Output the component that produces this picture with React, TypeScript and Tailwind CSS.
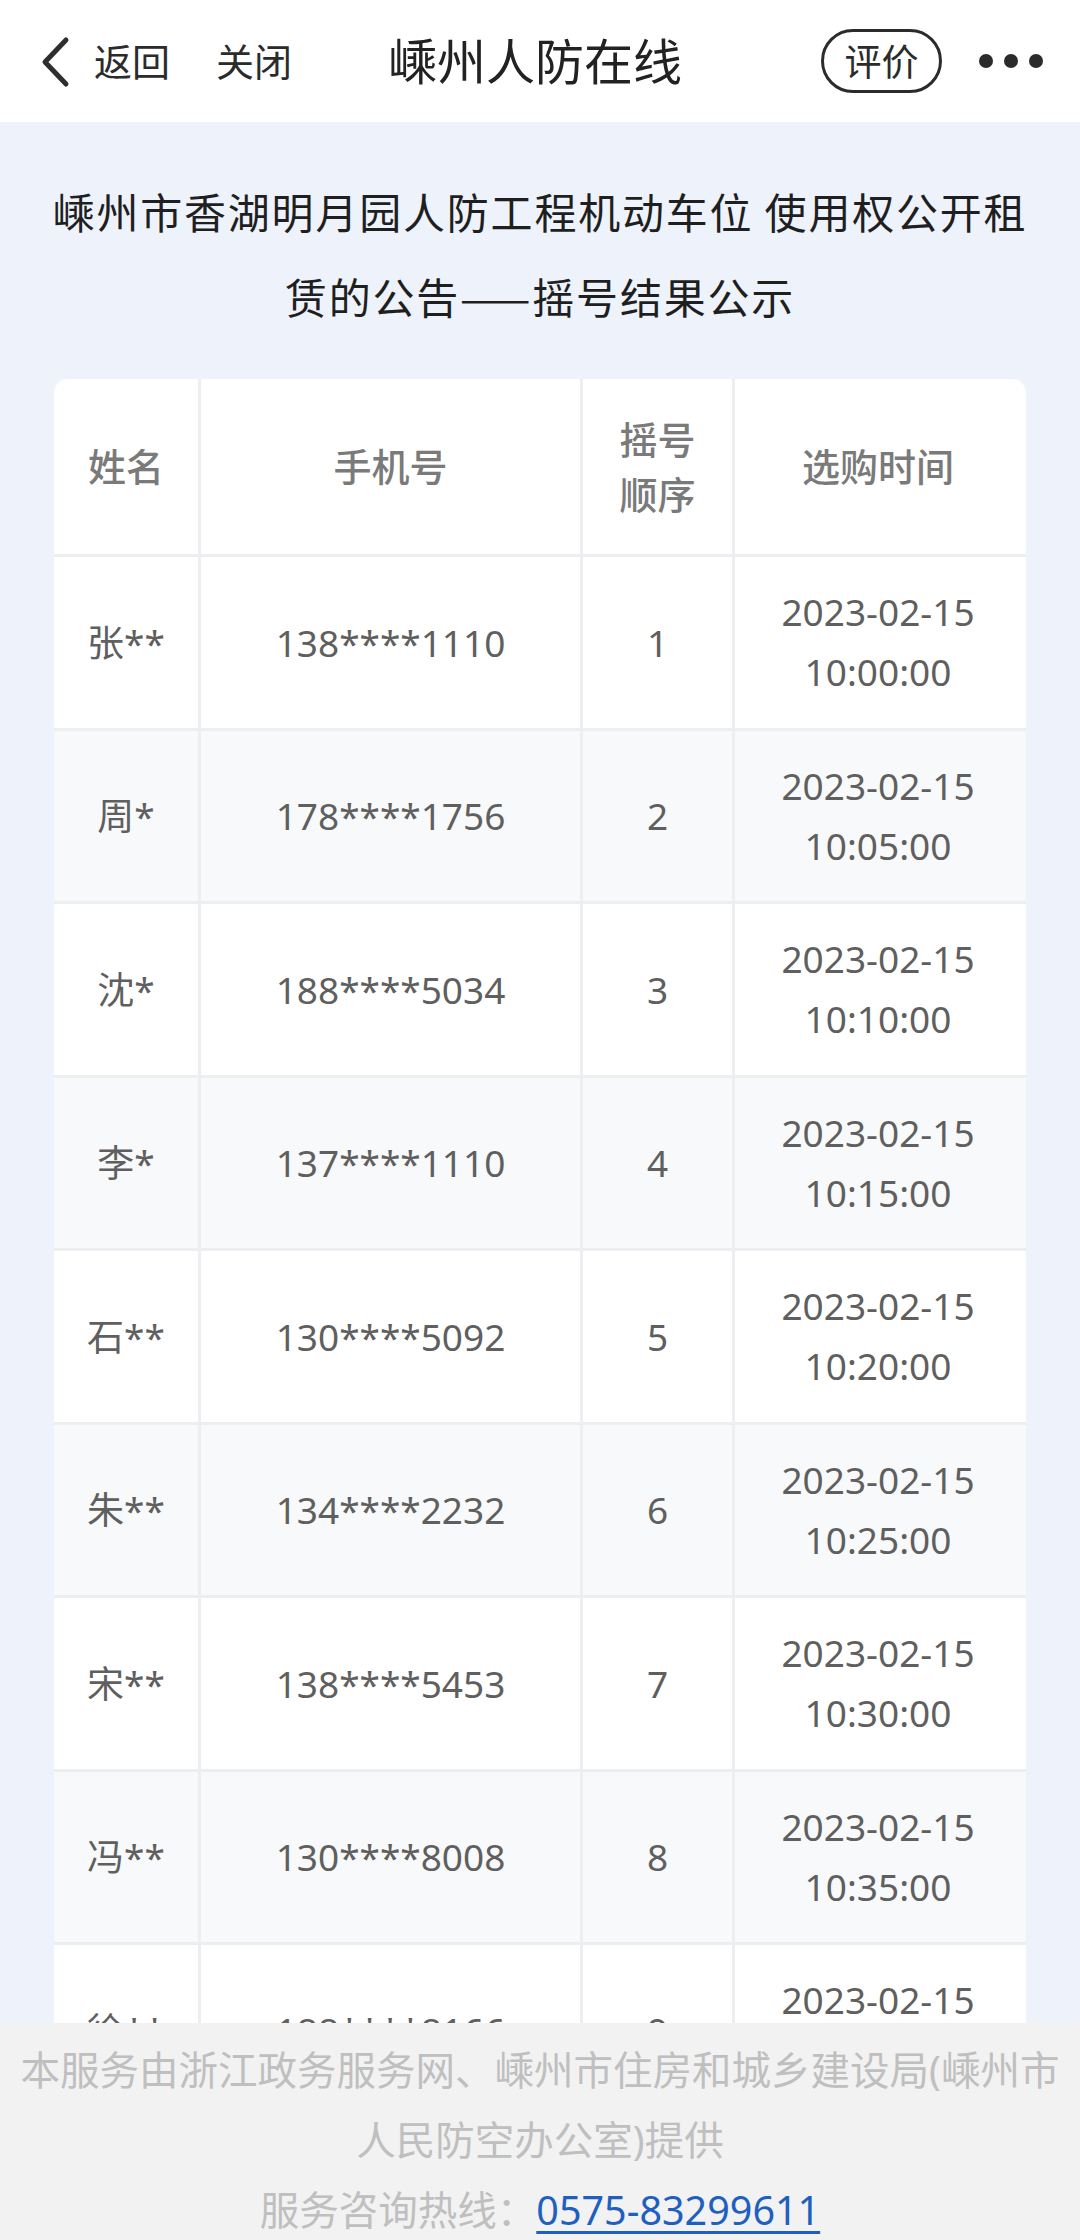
import React from "react";

const rows = [
  ["张**", "138****1110", "1", "10:00:00"],
  ["周*", "178****1756", "2", "10:05:00"],
  ["沈*", "188****5034", "3", "10:10:00"],
  ["李*", "137****1110", "4", "10:15:00"],
  ["石**", "130****5092", "5", "10:20:00"],
  ["朱**", "134****2232", "6", "10:25:00"],
  ["宋**", "138****5453", "7", "10:30:00"],
  ["冯**", "130****8008", "8", "10:35:00"],
  ["徐**", "188****8166", "9", "10:40:00"],
  ["王**", "139****2318", "10", "10:45:00"],
];

const FONT = { fontFamily: '"Noto Sans", "Noto Sans CJK SC", sans-serif' };
const CJK = { fontFamily: '"Noto Sans CJK SC", "Noto Sans", sans-serif' };

export default function App() {
  return (
    <div
      className="relative h-[2240px] w-[1080px] overflow-hidden bg-[#eef3fb]"
      style={FONT}
    >
      {/* top bar */}
      <div className="flex h-[122px] items-center bg-white px-[38px] text-[#2b2b2b]">
        <svg width="34" height="52" viewBox="0 0 34 52" className="mt-[2px]">
          <path
            d="M28 4 L7 26 L28 48"
            fill="none"
            stroke="#2e2e2e"
            strokeWidth="5"
            strokeLinecap="round"
            strokeLinejoin="round"
          />
        </svg>
        <span className="ml-[22px] text-[38px] leading-none">返回</span>
        <span className="ml-[46px] text-[38px] leading-none">关闭</span>
        <span className="ml-[96px] text-[49px] leading-none text-[#222]">嵊州人防在线</span>
        <div className="ml-auto flex h-[64px] w-[121px] items-center justify-center rounded-full border-[3px] border-[#2b2b2b] text-[37px] leading-none">
          评价
        </div>
        <div className="ml-[37px] mr-[-1px] flex items-center gap-[11px]">
          <span className="block h-[14px] w-[14px] rounded-full bg-[#2b2b2b]" />
          <span className="block h-[14px] w-[14px] rounded-full bg-[#2b2b2b]" />
          <span className="block h-[14px] w-[14px] rounded-full bg-[#2b2b2b]" />
        </div>
      </div>

      {/* title */}
      <div
        className="px-[46px] pt-[46px] text-center text-[42px] leading-[85px] tracking-[1.8px] text-[#1f1f1f]"
        style={CJK}
      >
        嵊州市香湖明月园人防工程机动车位 使用权公开租赁的公告——摇号结果公示
      </div>

      {/* table */}
      <div className="mx-[54px] mt-[41px] overflow-hidden rounded-[14px] bg-white">
        <div className="grid grid-cols-[147px_382px_152px_286px] text-[38px] font-medium text-[#7a7a7a]">
          <div className="flex h-[175px] items-center justify-center border-r-[3px] border-[#eceef2]">姓名</div>
          <div className="flex h-[175px] items-center justify-center border-r-[3px] border-[#eceef2]">手机号</div>
          <div className="flex h-[175px] flex-col items-center justify-center border-r-[3px] border-[#eceef2] leading-[55px]">
            <span>摇号</span>
            <span>顺序</span>
          </div>
          <div className="flex h-[175px] items-center justify-center">选购时间</div>
        </div>
        {rows.map((r, i) => (
          <div
            key={i}
            className={
              "grid grid-cols-[147px_382px_152px_286px] border-t-[3px] border-[#eceef2] text-[37px] text-[#5f5f5f] " +
              (i % 2 === 1 ? "bg-[#f8f9fa]" : "bg-white")
            }
          >
            <div className="flex h-[170.5px] items-center justify-center border-r-[3px] border-[#eceef2]">{r[0]}</div>
            <div className="flex h-[170.5px] items-center justify-center border-r-[3px] border-[#eceef2]">{r[1]}</div>
            <div className="flex h-[170.5px] items-center justify-center border-r-[3px] border-[#eceef2]">{r[2]}</div>
            <div className="flex h-[170.5px] flex-col items-center justify-center leading-[60px]">
              <span>2023-02-15</span>
              <span>{r[3]}</span>
            </div>
          </div>
        ))}
      </div>

      {/* footer overlay */}
      <div className="absolute bottom-0 left-0 right-0 h-[217px] bg-[#f2f2f2] px-[12px] pt-[12px] text-center text-[39.5px] leading-[70px] text-[#bfbfbf]">
        <div>本服务由浙江政务服务网、嵊州市住房和城乡建设局(嵊州市人民防空办公室)提供</div>
        <div>
          服务咨询热线：
          <span className="text-[#1f5fbf] underline decoration-[3px] underline-offset-[6px]">0575-83299611</span>
        </div>
      </div>
    </div>
  );
}
